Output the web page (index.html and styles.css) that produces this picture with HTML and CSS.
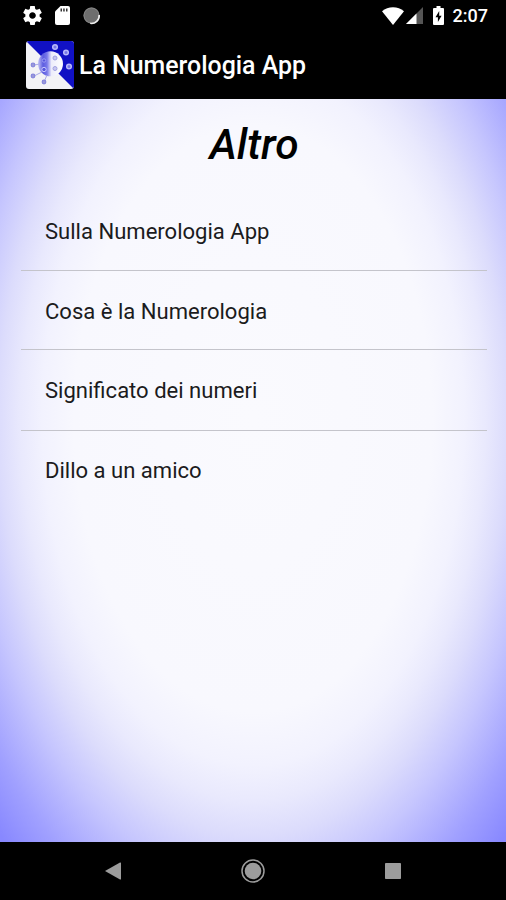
FILE: index.html
```html
<!DOCTYPE html>
<html lang="it">
<head>
    <meta charset="UTF-8">
    <title>La Numerologia App</title>
    <meta name="viewport" content="width=device-width, initial-scale=1">
    <link rel="stylesheet" href="styles.css">
</head>
<body>
    <div class="statusbar">
        <svg class="gear" width="19" height="19" viewBox="2 2 20 20"><path fill="#fff" d="M19.43 12.98c.04-.32.07-.64.07-.98s-.03-.66-.07-.98l2.11-1.65c.19-.15.24-.42.12-.64l-2-3.46c-.12-.22-.39-.3-.61-.22l-2.49 1c-.52-.4-1.08-.73-1.69-.98l-.38-2.65C14.46 2.18 14.25 2 14 2h-4c-.25 0-.46.18-.49.42l-.38 2.65c-.61.25-1.17.59-1.69.98l-2.49-1c-.23-.09-.49 0-.61.22l-2 3.46c-.13.22-.07.49.12.64l2.11 1.65c-.04.32-.07.65-.07.98s.03.66.07.98l-2.11 1.65c-.19.15-.24.42-.12.64l2 3.46c.12.22.39.3.61.22l2.49-1c.52.4 1.08.73 1.69.98l.38 2.65c.03.24.24.42.49.42h4c.25 0 .46-.18.49-.42l.38-2.65c.61-.25 1.17-.59 1.69-.98l2.49 1c.23.09.49 0 .61-.22l2-3.46c.12-.22.07-.49-.12-.64l-2.11-1.65zM12 15.500c-1.930 0-3.500-1.570-3.500-3.500s1.570-3.500 3.500-3.500 3.500 1.570 3.500 3.500-1.570 3.500-3.500 3.500z"/></svg>
        <svg class="sdcard" width="15" height="19" viewBox="0 0 15 19"><path fill="#fff" d="M5.500 0H13a2 2 0 0 1 2 2v15a2 2 0 0 1-2 2H2a2 2 0 0 1-2-2V5.500z"/><path fill="#333" d="M5.500 2.500h1.500v3H5.500zM8.200 2.500h1.500v3H8.200zM11 2.500h1.500v3H11z"/></svg>
        <svg class="sync" width="18" height="18" viewBox="0 0 18 18"><circle cx="8.500" cy="8.500" r="8" fill="#6e6e6e"/><circle cx="8.500" cy="8.500" r="7.500" fill="none" stroke="#858585"/><path d="M16.200 8a7.700 7.700 0 0 1-9 8.300" fill="none" stroke="#eee" stroke-width="1.600"/></svg>
        <div class="status-right">
            <svg width="22" height="18" viewBox="0 0 22 18"><path fill="#fff" d="M11 18L0 4.200C6-1 16-1 22 4.200z"/></svg>
            <svg class="signal" width="17" height="17" viewBox="0 0 17 17"><path fill="#555" d="M17 0v17H0z"/><path fill="#fff" d="M10.500 6.500V17H0z"/></svg>
            <svg class="battery" width="11" height="19" viewBox="0 0 11 19"><path fill="#fff" d="M3.500 0h4v2H10a1 1 0 0 1 1 1v15a1 1 0 0 1-1 1H1a1 1 0 0 1-1-1V3a1 1 0 0 1 1-1h2.500z"/><path fill="#000" d="M6.200 5L2.500 11.300h2.400V16l3.700-6.300H6.200z"/></svg>
            <span class="clock">2:07</span>
        </div>
    </div>

    <header class="appbar">
        <svg class="logo" width="48" height="48" viewBox="0 0 48 48">
            <defs>
                <linearGradient id="moon"><stop offset="0" stop-color="#c4c4f6"/><stop offset=".2" stop-color="#5c5ce0"/><stop offset=".36" stop-color="#7878ea"/><stop offset=".54" stop-color="#ededfb"/><stop offset="1" stop-color="#fff"/></linearGradient>
                <clipPath id="tile"><rect width="48" height="48" rx="3"/></clipPath>
            </defs>
            <g clip-path="url(#tile)">
                <rect width="48" height="48" fill="#f3f3f6"/>
                <path fill="#1111c4" d="M0 0h48v48z"/>
            </g>
            <circle cx="24.500" cy="22.800" r="12.500" fill="url(#moon)"/>
            <g fill="none" stroke="#a9a9e8"><path d="M8 24l6-1M8 35l8-4M18 41l3-7"/></g>
            <g fill="#7878e8" stroke="#b9b9fa" stroke-width="1.500"><circle cx="29" cy="6" r="2.300"/><circle cx="40" cy="11.500" r="2.300"/><circle cx="43" cy="25.500" r="2.300"/></g>
            <g fill="#9999d8" stroke="#8585dc" stroke-width="1.200"><circle cx="7" cy="24" r="1.800"/><circle cx="7" cy="35" r="1.800"/><circle cx="18" cy="41" r="1.800"/></g>
            <g fill="#c8c8f0" stroke="#a2a2e2"><circle cx="29" cy="17" r="2"/><circle cx="29" cy="27.500" r="2"/></g>
            <g fill="#5656dc" stroke="#c9c9ff"><circle cx="18" cy="28.500" r="2.200"/><circle cx="18" cy="19.500" r="1.700" stroke="#9c9cf4"/></g>
        </svg>
        <span class="app-name">La Numerologia App</span>
    </header>

    <main class="content">
        <h1>Altro</h1>
        <ul class="menu">
            <li>Sulla Numerologia App</li>
            <li>Cosa è la Numerologia</li>
            <li>Significato dei numeri</li>
            <li>Dillo a un amico</li>
        </ul>
    </main>

    <nav class="navbar">
        <svg width="16" height="18" viewBox="0 0 16 18"><path fill="#9c9c9c" d="M0 9L15 .5q1-.4 1 .5v16q0 .9-1 .5z"/></svg>
        <svg width="24" height="24" viewBox="0 0 24 24"><circle cx="12" cy="12" r="11" fill="none" stroke="#9c9c9c" stroke-width="1.500"/><circle cx="12" cy="12" r="8.300" fill="#9c9c9c"/></svg>
        <svg width="16" height="16" viewBox="0 0 16 16"><rect width="16" height="16" rx=".8" fill="#9c9c9c"/></svg>
    </nav>
</body>
</html>
```
FILE: styles.css
```css
body {
    font-family: Roboto, "Liberation Sans", sans-serif;
    background: #000;
    margin: 0;
    height: 900px;
    display: flex;
    flex-direction: column;
    overflow: hidden;
}
svg {
    display: block;
    flex: none;
}
.statusbar {
    height: 31px;
    box-sizing: border-box;
    padding: 0 18px 0 23px;
    display: flex;
    align-items: center;
}
.sdcard {
    margin-left: 13px;
}
.sync {
    margin-left: 13px;
}
.status-right {
    margin-left: auto;
    display: flex;
    align-items: center;
    color: #fff;
}
.signal {
    margin-left: 2px;
}
.battery {
    margin-left: 10px;
}
.clock {
    margin-left: 9px;
    font-size: 18px;
    font-weight: 500;
    line-height: 31px;
}
.appbar {
    height: 68px;
    padding-left: 26px;
    display: flex;
    align-items: center;
}
.app-name {
    color: #fff;
    font-size: 24.9px;
    font-weight: 500;
    margin-left: 5px;
}
.content {
    height: 743px;
    box-sizing: border-box;
    padding: 0 19px 0 21px;
    background: radial-gradient(ellipse 358px 587px at 253px 320px,
        #fafafe 0%, #f8f8fe 50%, #f2f2fe 59%, #e9e9fd 65%, #dcdcfc 71%,
        #c6c6fe 79%, #a0a0ff 91%, #8888ff 100%);
}
h1 {
    margin: 0;
    padding-top: 18px;
    text-align: center;
    font-size: 42.6px;
    font-weight: 500;
    font-style: italic;
    line-height: 54px;
    color: #000;
}
.menu {
    list-style: none;
    margin: 20px 0 0;
    padding: 0;
}
.menu li {
    height: 80px;
    box-sizing: border-box;
    padding-left: 24px;
    font-size: 22.05px;
    line-height: 82px;
    color: #1b1b20;
    border-bottom: 1px solid #c4c4cb;
}
.menu li:nth-child(2) {
    height: 79px;
}
.menu li:nth-child(3) {
    height: 81px;
}
.menu li:last-child {
    line-height: 80px;
    border-bottom: none;
}
.navbar {
    height: 58px;
    padding: 0 105px;
    display: flex;
    align-items: center;
    justify-content: space-between;
}
```
